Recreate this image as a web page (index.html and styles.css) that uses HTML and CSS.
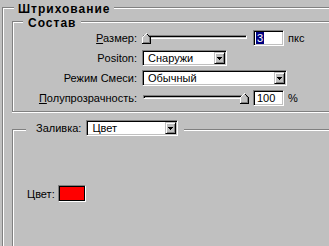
FILE: index.html
```html
<!DOCTYPE html>
<html lang="ru">
<head>
<meta charset="utf-8">
<link rel="stylesheet" href="styles.css">
</head>
<body>
<div class="group outer">
  <div class="g-title outer-title">Штрихование</div>
  <div class="group inner sostav">
    <div class="g-title sostav-title">Состав</div>
    <div class="rows">
      <div class="lbl"><u>Р</u>азмер:</div>
      <div class="ctl">
        <div class="slider">
          <div class="track"></div>
          <svg class="thumb thumb-min" width="9" height="11" viewBox="0 0 9 11" shape-rendering="crispEdges">
            <path fill="#c0c0c0" d="M4 1h1v1h-1zM3 2h3v1h-3zM2 3h4v1h-4zM1 4h6v5h-6z"/>
            <path fill="#ffffff" d="M4 0h1v1h-1zM3 1h1v1h-1zM2 2h1v1h-1zM1 3h1v1h-1zM0 4h1v6h-1z"/>
            <path fill="#808080" d="M6 3h1v1h-1zM7 4h1v5h-1zM1 9h7v1h-7z"/>
            <path fill="#000000" d="M5 1h1v1h-1zM6 2h1v1h-1zM7 3h1v1h-1zM8 4h1v7h-1zM0 10h8v1h-8z"/>
          </svg>
        </div>
        <div class="field"><span class="sel">3</span></div>
        <span class="unit">пкс</span>
      </div>

      <div class="lbl">Positon:</div>
      <div class="ctl">
        <div class="combo combo-pos"><span class="val">Снаружи</span><span class="btn"><svg width="5" height="3" viewBox="0 0 5 3" shape-rendering="crispEdges"><path d="M0 0h5v1h-1v1h-1v1h-1v-1h-1v-1h-1z"/></svg></span></div>
      </div>

      <div class="lbl">Режим Смеси:</div>
      <div class="ctl">
        <div class="combo combo-mode"><span class="val">Обычный</span><span class="btn"><svg width="5" height="3" viewBox="0 0 5 3" shape-rendering="crispEdges"><path d="M0 0h5v1h-1v1h-1v1h-1v-1h-1v-1h-1z"/></svg></span></div>
      </div>

      <div class="lbl"><u>П</u>олупрозрачность:</div>
      <div class="ctl">
        <div class="slider">
          <div class="track"></div>
          <svg class="thumb thumb-max" width="9" height="11" viewBox="0 0 9 11" shape-rendering="crispEdges">
            <path fill="#c0c0c0" d="M4 1h1v1h-1zM3 2h3v1h-3zM2 3h4v1h-4zM1 4h6v5h-6z"/>
            <path fill="#ffffff" d="M4 0h1v1h-1zM3 1h1v1h-1zM2 2h1v1h-1zM1 3h1v1h-1zM0 4h1v6h-1z"/>
            <path fill="#808080" d="M6 3h1v1h-1zM7 4h1v5h-1zM1 9h7v1h-7z"/>
            <path fill="#000000" d="M5 1h1v1h-1zM6 2h1v1h-1zM7 3h1v1h-1zM8 4h1v7h-1zM0 10h8v1h-8z"/>
          </svg>
        </div>
        <div class="field"><span class="num">100</span></div>
        <span class="unit">%</span>
      </div>
    </div>
  </div>

  <div class="group inner fill">
    <div class="fill-head">
      <span class="fill-lbl">Заливка:</span>
      <div class="combo combo-fill"><span class="val">Цвет</span><span class="btn"><svg width="5" height="3" viewBox="0 0 5 3" shape-rendering="crispEdges"><path d="M0 0h5v1h-1v1h-1v1h-1v-1h-1v-1h-1z"/></svg></span></div>
    </div>
    <div class="color-row">
      <span class="color-lbl">Цвет:</span>
      <span class="swatch"></span>
    </div>
  </div>
</div>
</body>
</html>
```

FILE: styles.css
```css
html, body {
  margin: 0;
  padding: 0;
  overflow: hidden;
  background: #c0c0c0;
}
body {
  width: 329px;
  height: 246px;
  box-sizing: border-box;
  padding: 7px 0 0 2px;
  font: 11px "Liberation Sans", Arial, sans-serif;
  color: #000;
}
u { text-decoration: underline; text-underline-offset: 1px; }

.group {
  border-top: 1px solid #808080;
  border-left: 1px solid #808080;
  box-shadow: inset 1px 1px #fff;
}
.outer {
  width: 420px;
  height: 320px;
}
.inner {
  margin-left: 9px;
  width: 400px;
}
.sostav {
  margin-top: 5px;
  border-bottom: 1px solid #808080;
  box-shadow: inset 1px 1px #fff, 0 1px #fff;
  padding-bottom: 3px;
}
.fill {
  margin-top: 17px;
  height: 200px;
}

.g-title {
  width: max-content;
  background: #c0c0c0;
  font-weight: bold;
  font-size: 12px;
  letter-spacing: 1px;
  line-height: 14px;
  height: 14px;
  margin-top: -6px;
}
.outer-title {
  margin-left: 11px;
  padding: 0 3px 0 4px;
}
.sostav-title {
  margin-left: 10px;
  padding: 0 5px 0 5px;
}

.rows {
  margin-top: -2px;
  display: grid;
  grid-template-columns: 124px max-content;
  grid-auto-rows: 20px;
  column-gap: 5px;
  align-items: center;
}
.lbl {
  text-align: right;
  white-space: nowrap;
}
.ctl {
  display: flex;
  align-items: center;
}

.slider {
  position: relative;
  width: 108px;
  height: 12px;
}
.track {
  margin: 3px 0 0 1px;
  width: 104px;
  height: 4px;
  box-sizing: border-box;
  border: 1px solid;
  border-color: #808080 #fff #fff #808080;
  box-shadow: inset 1px 1px #000;
  background: #c0c0c0;
}
.thumb {
  position: absolute;
  top: 1px;
  display: block;
}
.thumb-min { left: 0; }
.thumb-max { left: 98px; }

.field {
  margin-left: 3px;
  width: 31px;
  height: 16px;
  box-sizing: border-box;
  border: 1px solid;
  border-color: #808080 #fff #fff #808080;
  box-shadow: inset 1px 1px #000, inset -1px -1px #c0c0c0;
  background: #fff;
  padding: 1px 1px 1px 2px;
  line-height: 12px;
}
.sel {
  display: inline-block;
  background: #000080;
  color: #fff;
  padding: 0 1px;
  height: 12px;
}
.num {
  padding-left: 1px;
}
.unit {
  margin-left: 4px;
}

.combo {
  display: flex;
  height: 16px;
  box-sizing: border-box;
  border: 1px solid;
  border-color: #808080 #fff #fff #808080;
  box-shadow: inset 1px 1px #000, inset -1px -1px #c0c0c0;
  background: #fff;
  padding: 1px;
}
.combo-pos { width: 85px; }
.combo-mode { width: 145px; }
.combo-fill { width: 92px; }
.val {
  flex: 1;
  padding-left: 4px;
  line-height: 12px;
  white-space: nowrap;
}
.btn {
  width: 11px;
  height: 12px;
  box-sizing: border-box;
  border: 1px solid;
  border-color: #c0c0c0 #000 #000 #c0c0c0;
  box-shadow: inset 1px 1px #fff, inset -1px -1px #808080;
  background: #c0c0c0;
  display: flex;
  align-items: center;
  justify-content: center;
}
.btn svg { display: block; }

.fill-head {
  width: max-content;
  margin: -10px 0 0 13px;
  height: 16px;
  padding: 0 6px 0 10px;
  background: #c0c0c0;
  display: flex;
  align-items: center;
  gap: 5px;
}
.color-row {
  margin-top: 49px;
  padding-left: 14px;
  height: 17px;
  display: flex;
  align-items: center;
  gap: 3px;
}
.swatch {
  width: 28px;
  height: 17px;
  box-sizing: border-box;
  border: 1px solid;
  border-color: #808080 #fff #fff #808080;
  box-shadow: inset 0 0 0 1px #000;
  background: #ff0000;
}
```
